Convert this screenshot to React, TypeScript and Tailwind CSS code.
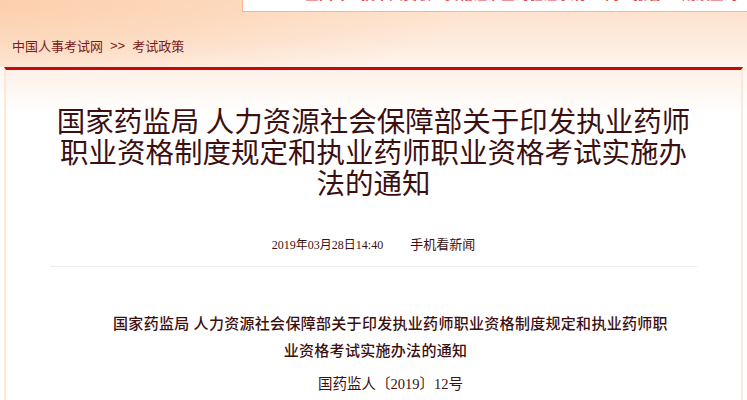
export default function App() {
	return (
		<div className="min-h-[400px] w-full overflow-hidden bg-[linear-gradient(180deg,#fde0c8_0px,#fdeadb_40px,#fff5ee_68px,#fff_110px)] font-['Noto_Sans_CJK_SC',sans-serif] text-[#3c1010]">
			<div className="bg-[radial-gradient(ellipse_460px_110px_at_0_0,#fcd0ae,transparent)]">
				<div className="flex h-[12px]">
					<div className="w-[242px] shrink-0" />
					<div className="flex-1 overflow-hidden border-b border-l border-[#f8b38a] bg-white pl-[62px]">
						<p className="-mt-[14px] whitespace-nowrap text-[14px] leading-[14px] font-bold text-[#e0484c]">
							全国专业技术人员职业资格证书查询验证系统 · 网上报名 · 成绩查询 · 证书查询
						</p>
					</div>
				</div>
				<nav className="flex items-center px-3 pt-[27px] pb-[14px] text-[13px] leading-[14px] text-[#7a1818]">
					<span>中国人事考试网</span>
					<span className="mx-[7px] font-['Liberation_Sans',sans-serif]">&gt;&gt;</span>
					<span>考试政策</span>
				</nav>
			</div>

			<main className="mx-[4px] min-h-[340px] border-x-2 border-t-[3px] border-x-[#fde7d9] border-t-[#c8090b] bg-[linear-gradient(180deg,#fdf1e8,#fff_45px)]">
				<h1 className="mx-auto w-[646px] pt-[34px] text-center text-[28.5px] leading-[31px] font-normal">
					国家药监局 人力资源社会保障部关于印发执业药师职业资格制度规定和执业药师职业资格考试实施办法的通知
				</h1>

				<div className="mt-[40px] flex items-center justify-center gap-[27px] font-['Liberation_Serif','Noto_Sans_CJK_SC',serif] leading-[16px]">
					<span className="text-[12px]">2019年03月28日14:40</span>
					<span className="text-[13px]">手机看新闻</span>
				</div>

				<div className="mx-[44px] mt-[13px] h-px bg-[#e9eef5]" />

				<div className="pl-[34px] pt-[44px] text-center font-['Liberation_Serif','Noto_Sans_CJK_SC',serif] text-[14.5px] leading-[27px]">
					<p className="text-[15px] font-medium tracking-[0.3px]">
						国家药监局 人力资源社会保障部关于印发执业药师职业资格制度规定和执业药师职
						<br />
						<span className="pr-[30px]">业资格考试实施办法的通知</span>
					</p>
					<p className="mt-[6px]">国药监人〔2019〕12号</p>
				</div>
			</main>
		</div>
	);
}
